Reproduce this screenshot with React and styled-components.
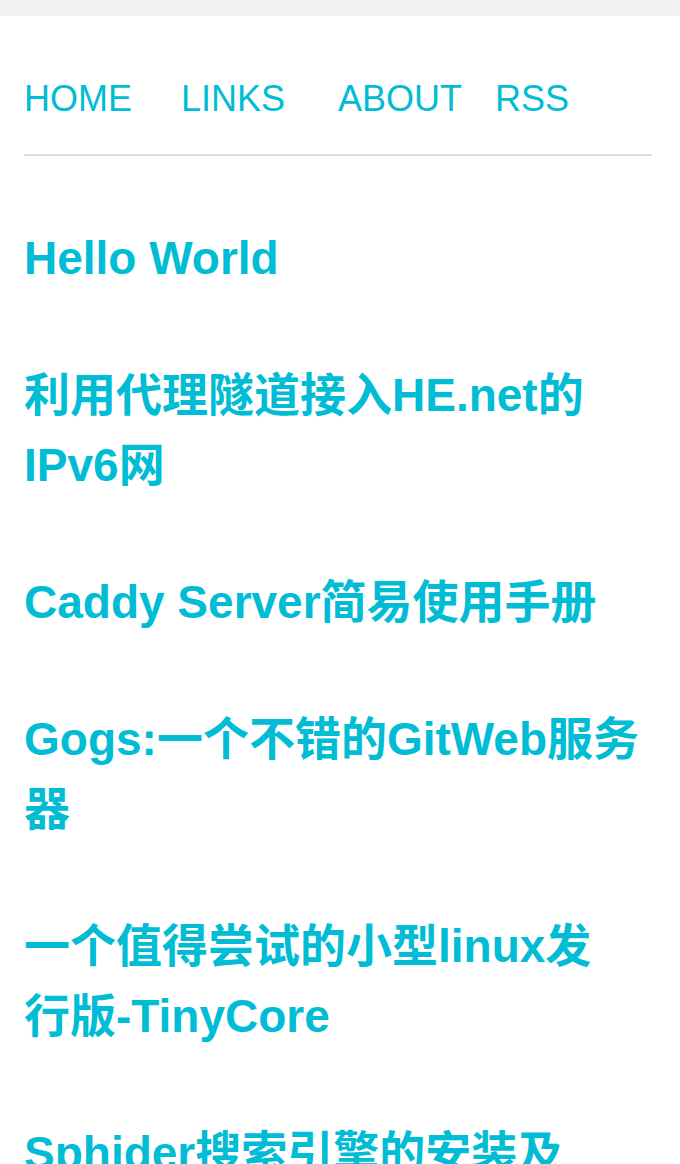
import React from "react";
import styled, { createGlobalStyle } from "styled-components";

const GlobalStyle = createGlobalStyle`
  html, body {
    margin: 0;
    padding: 0;
    background: #f2f2f2;
  }
  body {
    font-family: "Liberation Sans", "Noto Sans CJK SC", sans-serif;
  }
`;

const navItems = ["HOME", "LINKS", "ABOUT", "RSS"];

// each title is split the way the original wraps it
const posts = [
  ["Hello World"],
  ["利用代理隧道接入HE.net的", "IPv6网"],
  ["Caddy Server简易使用手册"],
  ["Gogs:一个不错的GitWeb服务", "器"],
  ["一个值得尝试的小型linux发", "行版-TinyCore"],
  ["Sphider搜索引擎的安装及", "使用"],
];

export default function App() {
  return (
    <>
      <GlobalStyle />
      <Page>
        <Main>
          <Nav>
            {navItems.map((item) => (
              <NavLink key={item} href="#">{item}</NavLink>
            ))}
          </Nav>
          <Divider />
          <PostList>
            {posts.map((lines, i) => (
              <PostTitle key={i}>
                <TitleLink href="#">
                  {lines.map((line) => (
                    <Line key={line}>{line}</Line>
                  ))}
                </TitleLink>
              </PostTitle>
            ))}
          </PostList>
        </Main>
      </Page>
    </>
  );
}

const Page = styled.div`
  padding-top: 16px;
  min-height: 100vh;
  box-sizing: border-box;
`;

const Main = styled.main`
  background: #fff;
  padding: 62px 28px 40px 24px;
  min-height: calc(100vh - 16px);
  box-sizing: border-box;
`;

const Nav = styled.nav`
  display: grid;
  grid-template-columns: repeat(4, 157px);
`;

const NavLink = styled.a`
  font-size: 36px;
  line-height: 42px;
  color: #00bcd4;
  text-decoration: none;
`;

const Divider = styled.hr`
  margin: 34px 0 0;
  border: 0;
  border-top: 2px solid #dcdcdc;
  height: 0;
`;

const PostList = styled.section`
  display: flex;
  flex-direction: column;
  gap: 67px;
  padding-top: 67px;
`;

const PostTitle = styled.h2`
  margin: 0;
  font-size: 46px;
  line-height: 70px;
  font-weight: bold;
`;

const TitleLink = styled.a`
  color: #00bcd4;
  text-decoration: none;
`;

const Line = styled.span`
  display: block;
`;
